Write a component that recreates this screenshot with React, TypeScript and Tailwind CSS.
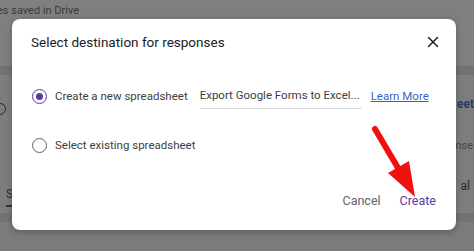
import { X } from "lucide-react";

function Radio({ checked }: { checked: boolean }) {
    return (
        <span
            className={`flex h-[15px] w-[15px] shrink-0 items-center justify-center rounded-full border-[1.5px] ${
                checked ? "border-[#5b3a9e]" : "border-[#5f6368]"
            }`}
        >
            {checked && <span className="h-[7px] w-[7px] rounded-full bg-[#5b3a9e]" />}
        </span>
    );
}

export default function App() {
    return (
        <div
            className="relative h-[251px] w-[474px] overflow-hidden bg-[#7d7d7d]"
            style={{ fontFamily: "Roboto, 'Noto Sans', sans-serif" }}
        >
            {/* Page behind the overlay */}
            <div className="flex h-full flex-col">
                <div className="h-[66px] bg-[#7f7f7f] pt-[3px] text-[11px] text-[#3a3a3a]">
                    <span className="-ml-[3px]">es saved in Drive</span>
                </div>
                <div className="h-[9px] bg-[#727272]" />
                <div className="flex flex-1 flex-col bg-[#7d7d7d]">
                    <div className="flex h-[138px] flex-col justify-between">
                        <div className="mt-[20px] flex justify-between">
                            <span className="-ml-[6px] mt-[8px] h-[12px] w-[12px] rounded-full border-[1.5px] border-[#2a2a2a]" />
                            <span className="text-[12px] font-bold text-[#2c3a66]">eet</span>
                        </div>
                        <div className="flex justify-end pr-[1px] text-[11px] text-[#444]">nse</div>
                        <div className="mb-[6px] flex items-end justify-between text-[12px] text-[#2a2a2a]">
                            <div className="flex flex-col pl-[6px]">
                                <span>S</span>
                                <span className="mt-[2px] h-[2px] w-[8px] bg-[#333]" />
                            </div>
                            <span className="mb-[12px] pr-[4px]">al</span>
                        </div>
                    </div>
                    <div className="h-[9px] bg-[#727272]" />
                    <div className="flex-1 bg-[#7b7b7b]" />
                </div>
            </div>

            {/* Dialog */}
            <div className="absolute left-[12px] top-[19px] flex h-[211px] w-[444px] flex-col rounded-[8px] bg-white shadow-[0_2px_6px_rgba(0,0,0,0.25)]">
                <div className="flex items-center justify-between pl-[19px] pr-[14px] pt-[13px]">
                    <h2 className="text-[13.5px] text-[#202124]">Select destination for responses</h2>
                    <X className="h-[18px] w-[18px] text-[#202124]" strokeWidth={2} />
                </div>

                <div className="mt-[33px] flex items-center pl-[20px]">
                    <Radio checked />
                    <span className="ml-[8px] whitespace-nowrap text-[11.5px] text-[#3c4043]">Create a new spreadsheet</span>
                    <div className="ml-[12px] whitespace-nowrap border-b border-[#dadce0] pb-[3px] pr-[2px] pt-[2px] text-[11.5px] text-[#3c4043]">
                        Export Google Forms to Excel...
                    </div>
                    <a className="ml-[9px] whitespace-nowrap text-[11.5px] text-[#3b5fc9] underline">Learn More</a>
                </div>

                <div className="mt-[28px] flex items-center pl-[20px]">
                    <Radio checked={false} />
                    <span className="ml-[8px] whitespace-nowrap text-[11.5px] text-[#3c4043]">Select existing spreadsheet</span>
                </div>

                <div className="mt-auto flex justify-end gap-[19px] pb-[19px] pr-[20px] text-[12.5px]">
                    <span className="text-[#5f6368]">Cancel</span>
                    <span className="text-[#5b3a9e]">Create</span>
                </div>
            </div>

            {/* Red arrow annotation */}
            <svg className="absolute left-0 top-0" width="474" height="251" viewBox="0 0 474 251">
                <line x1="375" y1="129" x2="401" y2="173" stroke="#f01010" strokeWidth="6" strokeLinecap="round" />
                <polygon points="388,173 409,161 415,197" fill="#f01010" />
            </svg>
        </div>
    );
}
